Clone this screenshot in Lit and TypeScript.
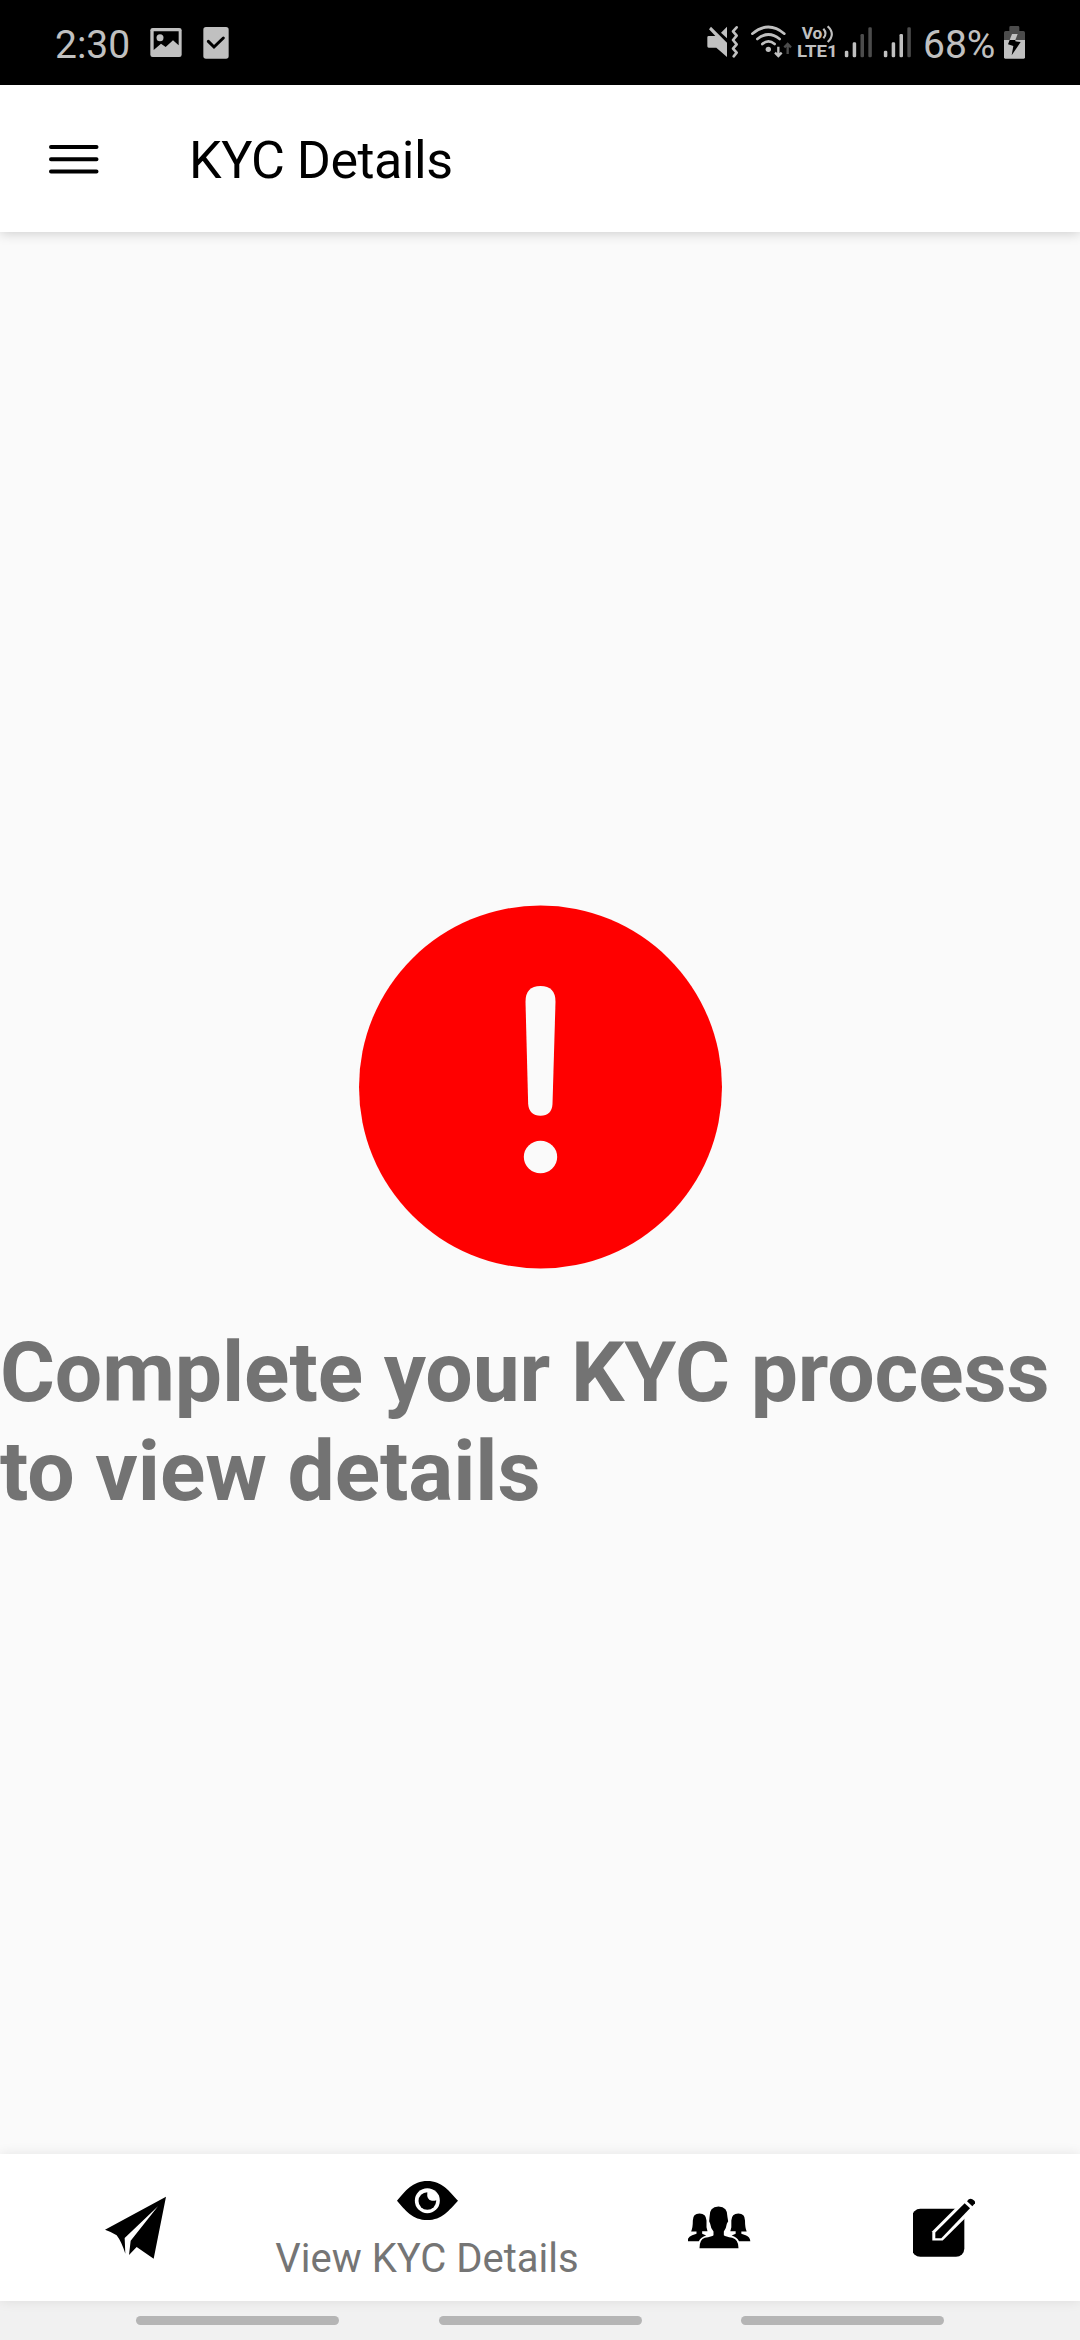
import { LitElement, html, css, svg } from "lit";
import { customElement } from "lit/decorators.js";

const LIGHT = "#c0c0c0";
const DIM = "#4c4c4c";

/** Four cellular bars; `active` of them are lit. */
const signal = (x: number, active: number) =>
  [122, 97, 72, 52].map(
    (top, i) => svg`<rect x=${x + i * 23.5} y=${top} width="10.5" height=${142 - top} rx="4"
      fill=${i < active ? LIGHT : DIM}></rect>`
  );

@customElement("status-bar")
export class StatusBar extends LitElement {
  static styles = css`
    :host {
      display: flex;
      height: 85px;
      background: #000;
      color: #c0c0c0;
      font: 39px/85px Roboto, sans-serif;
    }
    svg {
      display: block;
      height: 85px;
      flex: none;
    }
    .time {
      padding-left: 55px;
      width: 93px;
      padding-top: 3px;
      height: 82px;
    }
    .notices {
      width: 84px;
    }
    .radios {
      width: 217px;
      margin-left: auto;
    }
    .percent {
      width: 80px;
      padding-left: 4px;
      padding-top: 3px;
      height: 82px;
      white-space: nowrap;
    }
    .battery {
      width: 23px;
      margin-right: 54px;
    }
    .net {
      font-weight: 700;
      fill: #c0c0c0;
    }
  `;
  render() {
    return html`
      <div class="time">2:30</div>
      <svg class="notices" viewBox="444 0 252 255">
        <rect x="451" y="84" width="94" height="87" rx="7" fill=${LIGHT}></rect>
        <path d="M461 94H536V136L519 121L497 141L483 131L461 150Z" fill="#000"></path>
        <circle cx="480" cy="113" r="10.5" fill=${LIGHT}></circle>
        <rect x="610" y="81" width="76" height="95" rx="8" fill=${LIGHT}></rect>
        <path d="M625 124L642 141L670 114" fill="none" stroke="#000" stroke-width="9" stroke-linecap="round"></path>
      </svg>
      <svg class="radios" viewBox="30 -30 651 255">
        <path d="M57 50L105 98V141L73 113H50Q46 113 46 109V82Q46 78 50 78H70L51 58Z" fill=${LIGHT}></path>
        <path d="M105 50V85L87 68Z" fill=${LIGHT}></path>
        <path d="M134 52L123 64L134 77L123 90L134 103L123 116L134 128L125 139" fill="none" stroke=${LIGHT} stroke-width="8" stroke-linecap="round" stroke-linejoin="round"></path>
        <g fill="none" stroke=${LIGHT} stroke-width="8" stroke-linecap="round">
          <path d="M181 71Q229 31 277 71"></path>
          <path d="M196 87Q229 60 263 87"></path>
          <path d="M211 102Q229 86 248 102"></path>
        </g>
        <circle cx="229" cy="118" r="8" fill=${LIGHT}></circle>
        <path d="M259 110V137M249 128L259 138L269 128" fill="none" stroke=${LIGHT} stroke-width="7"></path>
        <path d="M287 132V104M277 112L287 102L297 112" fill="none" stroke=${DIM} stroke-width="7"></path>
        <text class="net" x="329" y="87" font-size="49" textLength="62" lengthAdjust="spacingAndGlyphs">Vo</text>
        <path d="M394 56Q407 70 394 85M407 49Q432 73 407 96" fill="none" stroke=${LIGHT} stroke-width="6.5"></path>
        <text class="net" x="315" y="141" font-size="51" textLength="122" lengthAdjust="spacingAndGlyphs">LTE1</text>
        ${signal(458.5, 2)} ${signal(575.5, 3)}
      </svg>
      <div class="percent">68%</div>
      <svg class="battery" viewBox="369 -30 69 255">
        <path d="M372 90V68Q372 63 377 63H388V52Q388 48 392 48H414Q418 48 418 52V63H430Q435 63 435 68V90Z" fill=${DIM}></path>
        <path d="M372 90H435V142Q435 146 431 146H376Q372 146 372 142Z" fill=${LIGHT}></path>
        <path d="M396 72H413L406 90H389Z" fill=${LIGHT}></path>
        <path d="M389 90H406V94L422 96L395 136L400 108L384 103Z" fill="#000"></path>
      </svg>
    `;
  }
}

@customElement("app-header")
export class AppHeader extends LitElement {
  static styles = css`
    :host {
      display: flex;
      align-items: center;
      height: 147px;
      background: #fff;
      color: #000;
      position: relative;
      box-shadow: 0 2px 11px rgba(0, 0, 0, 0.17);
      font: 52px/62px Roboto, sans-serif;
    }
    .menu {
      display: block;
      width: 50px;
      height: 30px;
      margin-left: 49px;
      margin-right: 90px;
    }
    .title {
      font-weight: 400;
      letter-spacing: -0.5px;
      padding-top: 4px;
    }
  `;
  render() {
    return html`
      <svg class="menu" viewBox="0 0 50 30">
        <path d="M2 3H47.5M2 15.3H47.5M2 27.6H47.5" stroke="#000" stroke-width="4" stroke-linecap="round"></path>
      </svg>
      <div class="title">KYC Details</div>
    `;
  }
}

@customElement("tab-bar")
export class TabBar extends LitElement {
  static styles = css`
    :host {
      display: grid;
      grid-template-columns: 270px 314px 271px 180px;
      height: 147px;
      background: #fff;
      position: relative;
      box-shadow: 0 0 12px rgba(0, 0, 0, 0.09);
      font: 40px/46px Roboto, sans-serif;
      color: #757575;
    }
    .tab {
      display: flex;
      flex-direction: column;
      align-items: center;
      justify-content: center;
      white-space: nowrap;
    }
    .tab svg {
      display: block;
      width: 64px;
      height: 64px;
    }
    .active {
      justify-content: flex-start;
      padding-top: 15px;
      gap: 3px;
    }
  `;
  render() {
    return html`
      <div class="tab">
        <svg viewBox="69 166 192 192">
          <path d="M258 168L75 267Q96 274 110 284Q124 302 136 339L134 292L234 197L152 300L147 343L170 319L221 354Z"></path>
        </svg>
      </div>
      <div class="tab active">
        <svg viewBox="45 87 192 192">
          <path d="M51 182C75 154 98 123 142 123S208 154 234 182C208 210 186 240 142 240S75 210 51 182Z"></path>
          <circle cx="142" cy="182" r="37.5" fill="#fff"></circle>
          <circle cx="142" cy="183" r="26.5"></circle>
          <path d="M142 155Q139 181 156 182Q164 184 170 179L176 166L160 152Z" fill="#fff"></path>
        </svg>
        <div>View KYC Details</div>
      </div>
      <div class="tab">
        <svg viewBox="82.5 76.5 192 192">
          <path d="M147 140Q146 108 174 108T201 140L203 152L199 160Q197 175 190 183V194Q195 198 215 202Q234 207 234 233H117Q117 207 133 202Q155 198 159 194V183Q151 175 149 160L146 152Z"></path>
          <path id="side" d="M97 150Q97 129 117 129T138 150V170L141 182H125V190L137 195Q121 200 115 212H81Q82 198 95 194L108 190V183H92Q97 172 97 150Z"></path>
          <use href="#side" transform="translate(350.5 0) scale(-1 1)"></use>
        </svg>
      </div>
      <div class="tab">
        <svg viewBox="99 76.5 192 192">
          <rect x="96" y="115" width="157" height="144" rx="25"></rect>
          <path d="M157 210V182L262 77L292 107L188 210Z" fill="#fff"></path>
          <path d="M166 203V186L254 98L270 113L184 203Z"></path>
          <path d="M261 92Q268 82 277 86Q287 91 285 98L277 107Z"></path>
        </svg>
      </div>
    `;
  }
}

@customElement("app-root")
export class AppRoot extends LitElement {
  static styles = css`
    :host {
      display: flex;
      flex-direction: column;
      width: 1080px;
      height: 2340px;
      overflow: hidden;
      background: #fafafa;
    }
    .content {
      flex: 1;
      display: flex;
      flex-direction: column;
      padding-top: 673px;
    }
    .alert {
      display: block;
      width: 364px;
      height: 364px;
      align-self: center;
    }
    .message {
      margin: 54px 0 0;
      font: 700 84px/99px Roboto, sans-serif;
      letter-spacing: -0.1px;
      color: #737373;
    }
    .system {
      height: 39px;
      background: #f1f1f1;
      display: flex;
      align-items: center;
      justify-content: center;
      gap: 99.5px;
    }
    .pill {
      width: 203px;
      height: 9px;
      border-radius: 5px;
      background: #b5b5b5;
    }
  `;
  render() {
    return html`
      <status-bar></status-bar>
      <app-header></app-header>
      <main class="content">
        <svg class="alert" viewBox="54.5 45 1092 1092">
          <circle cx="602" cy="591" r="544.5" fill="#f00"></circle>
          <path d="M557 335Q557 288 602 288T647 335L638 642Q636 677 602 677T565 642Z" fill="#fafafa"></path>
          <ellipse cx="602" cy="801" rx="50" ry="48.5" fill="#fafafa"></ellipse>
        </svg>
        <p class="message">Complete your KYC process to view details</p>
      </main>
      <tab-bar></tab-bar>
      <div class="system">
        <div class="pill"></div>
        <div class="pill"></div>
        <div class="pill"></div>
      </div>
    `;
  }
}
